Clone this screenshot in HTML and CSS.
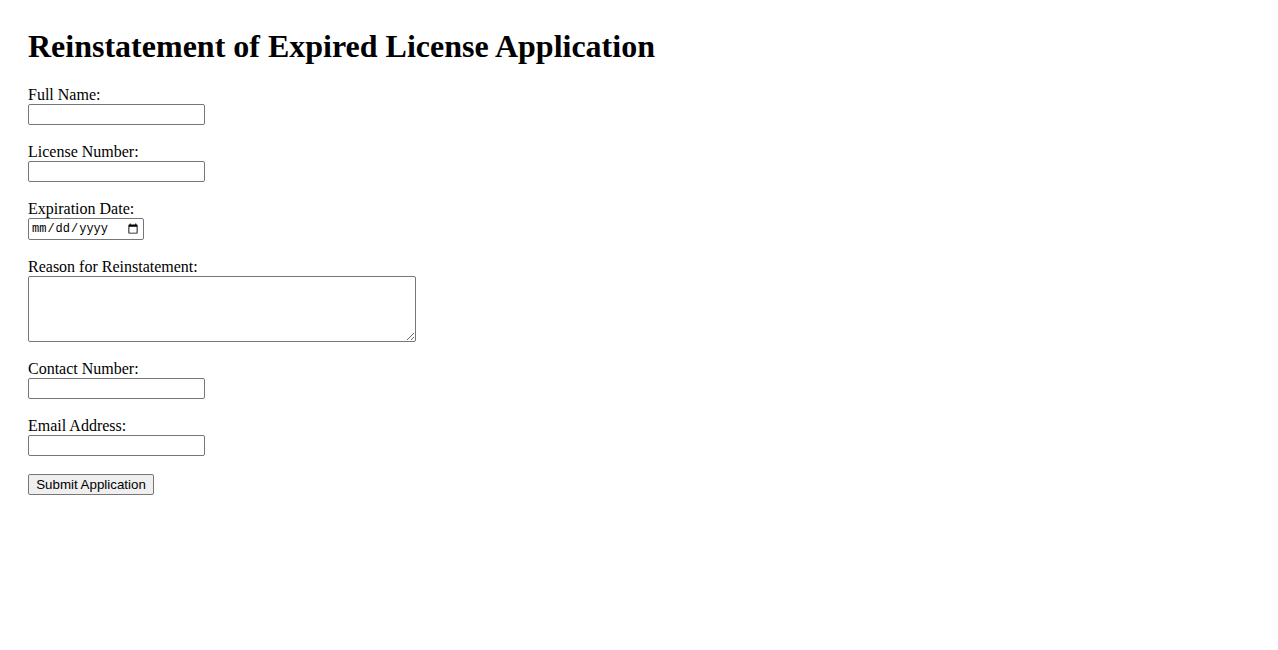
FILE: index.html
```html
<!DOCTYPE html>
<html lang="en">
<head>
<meta charset="utf-8">
<title>Reinstatement of Expired License Application</title>
<link rel="stylesheet" href="styles.css">
</head>
<body>
<div class="page">
  <h1 class="title">Reinstatement of Expired License Application</h1>
  <form class="form">
    <div class="field">
      <label class="label" for="name">Full Name:</label>
      <input class="input" type="text" id="name">
    </div>
    <div class="field">
      <label class="label" for="license">License Number:</label>
      <input class="input" type="text" id="license">
    </div>
    <div class="field">
      <label class="label" for="exp">Expiration Date:</label>
      <input class="date" type="date" id="exp">
    </div>
    <div class="field">
      <label class="label" for="reason">Reason for Reinstatement:</label>
      <textarea class="textarea" id="reason"></textarea>
    </div>
    <div class="field">
      <label class="label" for="phone">Contact Number:</label>
      <input class="input" type="tel" id="phone">
    </div>
    <div class="field">
      <label class="label" for="email">Email Address:</label>
      <input class="input" type="email" id="email">
    </div>
    <button class="submit" type="button">Submit Application</button>
  </form>
</div>
</body>
</html>
```

FILE: styles.css
```css
html, body {
  margin: 0;
  padding: 0;
  background: #ffffff;
}
body {
  font-family: "Liberation Serif", "Times New Roman", serif;
  font-size: 16px;
  color: #000000;
}
.page {
  padding: 28px;
}
.title {
  font-size: 32px;
  font-weight: bold;
  line-height: 37px;
  margin: 0 0 21px 0;
}
.form {
  display: flex;
  flex-direction: column;
  align-items: flex-start;
}
.field {
  display: flex;
  flex-direction: column;
  align-items: flex-start;
  margin-bottom: 18px;
}
.label {
  display: block;
  line-height: 18px;
  height: 18px;
}
.input,
.date,
.textarea {
  box-sizing: border-box;
  margin: 0;
  border: 1px solid #767676;
  border-radius: 2px;
  background: #ffffff;
  font-family: "Liberation Sans", Arial, sans-serif;
  font-size: 13.333px;
}
.input {
  width: 177px;
  height: 21px;
  padding: 1px 2px;
}
.date {
  width: 116px;
  height: 22px;
  padding: 1px 2px;
  font-family: "Liberation Mono", monospace;
  font-size: 12px;
}
.textarea {
  width: 388px;
  height: 66px;
  padding: 2px;
  resize: both;
}
.submit {
  box-sizing: border-box;
  margin: 0;
  width: 126px;
  height: 21px;
  padding: 1px 6px;
  border: 1px solid #767676;
  border-radius: 2px;
  background: #efefef;
  font-family: "Liberation Sans", Arial, sans-serif;
  font-size: 13.333px;
  color: #000000;
}
```
